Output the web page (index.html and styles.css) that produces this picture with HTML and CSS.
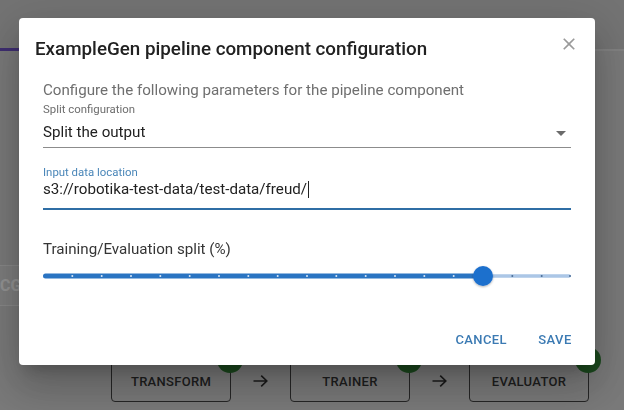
FILE: index.html
```html
<!DOCTYPE html>
<html lang="en">
<head>
<meta charset="utf-8">
<title>ExampleGen configuration</title>
<link rel="stylesheet" href="styles.css">
</head>
<body>
  <div class="page">
    <header class="topbar"><div class="tab-indicator"></div></header>
    <main class="workspace">
      <div class="side-field">CG</div>
      <div class="pipeline">
        <div class="node">TRANSFORM<span class="node-status"></span></div>
        <div class="connector"><svg width="15" height="12" viewBox="0 0 15 12"><path d="M0.5 6H13.8M8.2 0.6L13.8 6 8.2 11.4" fill="none" stroke="currentColor" stroke-width="1.6"/></svg></div>
        <div class="node">TRAINER<span class="node-status"></span></div>
        <div class="connector"><svg width="15" height="12" viewBox="0 0 15 12"><path d="M0.5 6H13.8M8.2 0.6L13.8 6 8.2 11.4" fill="none" stroke="currentColor" stroke-width="1.6"/></svg></div>
        <div class="node">EVALUATOR<span class="node-status"></span></div>
      </div>
    </main>
  </div>

  <div class="overlay">
    <div class="dialog">
      <div class="dialog-header">
        <h2 class="dialog-title">ExampleGen pipeline component configuration</h2>
        <svg class="close-btn" width="20" height="20" viewBox="0 0 24 24"><path d="M19 6.41L17.59 5 12 10.59 6.41 5 5 6.41 10.59 12 5 17.59 6.41 19 12 13.41 17.59 19 19 17.59 13.41 12z"/></svg>
      </div>
      <div class="dialog-content">
        <p class="dialog-subtitle">Configure the following parameters for the pipeline component</p>
        <div class="select-field">
          <div class="field-label">Split configuration</div>
          <div class="select-value"><span>Split the output</span><span class="select-arrow"></span></div>
        </div>
        <div class="input-field">
          <div class="field-label">Input data location</div>
          <div class="input-value">s3://robotika-test-data/test-data/freud/<span class="caret"></span></div>
        </div>
        <div class="slider-label">Training/Evaluation split (%)</div>
        <svg class="slider" width="528" height="20" viewBox="0 0 528 20">
          <defs><filter id="thumbShadow" x="-50%" y="-50%" width="200%" height="200%"><feDropShadow dx="0" dy="1" stdDeviation="1" flood-color="#000" flood-opacity="0.3"/></filter></defs>
          <line x1="2" y1="10" x2="526" y2="10" stroke="#abc6e6" stroke-width="3.5" stroke-linecap="round"/>
          <line x1="2.5" y1="10" x2="440" y2="10" stroke="#2a74c2" stroke-width="5" stroke-linecap="round"/>
          <g fill="#dbe8f6">
            <circle cx="29.3" cy="10" r="1"/><circle cx="58.7" cy="10" r="1"/><circle cx="88" cy="10" r="1"/><circle cx="117.3" cy="10" r="1"/><circle cx="146.7" cy="10" r="1"/><circle cx="176" cy="10" r="1"/><circle cx="205.3" cy="10" r="1"/><circle cx="234.7" cy="10" r="1"/><circle cx="264" cy="10" r="1"/><circle cx="293.3" cy="10" r="1"/><circle cx="322.7" cy="10" r="1"/><circle cx="352" cy="10" r="1"/><circle cx="381.3" cy="10" r="1"/><circle cx="410.7" cy="10" r="1"/>
          </g>
          <g fill="#4a6c97">
            <circle cx="469.3" cy="10" r="1"/><circle cx="498.7" cy="10" r="1"/><circle cx="527" cy="10" r="1"/>
          </g>
          <circle cx="440" cy="10" r="10" fill="#1f6fcd" filter="url(#thumbShadow)"/>
        </svg>
      </div>
      <div class="dialog-actions">
        <button class="btn">Cancel</button>
        <button class="btn">Save</button>
      </div>
    </div>
  </div>
</body>
</html>
```

FILE: styles.css
```css
* { box-sizing: border-box; }
html, body { margin: 0; padding: 0; }
body {
  width: 624px;
  height: 410px;
  overflow: hidden;
  font-family: Roboto, "Noto Sans", sans-serif;
  background: #d0d0d0;
}

/* background page */
.topbar {
  height: 51px;
  background: #c6c6c6;
  box-shadow: inset 0 -2px 0 #dedede;
  display: flex;
  align-items: flex-end;
}
.tab-indicator { width: 140px; height: 3px; background: #6b4fc0; }
.workspace { padding-top: 214px; }
.side-field {
  width: 160px;
  height: 41px;
  border-top: 1px solid #e8e8e8;
  border-bottom: 1px solid #e8e8e8;
  background: #d6d6d6;
  color: #fcfcfc;
  font-size: 16px;
  font-weight: 700;
  line-height: 39px;
}
.pipeline {
  display: flex;
  align-items: center;
  margin-top: 54px;
  padding-left: 111px;
}
.node {
  position: relative;
  width: 120px;
  height: 42px;
  border: 1px solid #404040;
  border-radius: 4px;
  display: flex;
  align-items: center;
  justify-content: center;
  font-size: 13px;
  font-weight: 500;
  letter-spacing: 0.3px;
  color: #333;
}
.node-status {
  position: absolute;
  top: -14px;
  right: -13px;
  width: 26px;
  height: 26px;
  border-radius: 50%;
  background: #2e7d32;
}
.connector {
  width: 59px;
  display: flex;
  justify-content: center;
  color: #2c2c2c;
}

/* dialog */
.overlay {
  position: fixed;
  inset: 0;
  background: rgba(0, 0, 0, 0.42);
  padding: 18px 0 0 19px;
}
.dialog {
  width: 576px;
  background: #fff;
  border-radius: 4px;
  box-shadow: 0 11px 15px -7px rgba(0,0,0,.2), 0 24px 38px 3px rgba(0,0,0,.14), 0 9px 46px 8px rgba(0,0,0,.12);
}
.dialog-header {
  display: flex;
  justify-content: space-between;
  align-items: flex-start;
  padding: 19px 16px 0 16px;
}
.dialog-title {
  margin: 0;
  font-size: 18.8px;
  font-weight: 500;
  line-height: 24px;
  color: #212121;
}
.close-btn { margin-top: -3px; fill: #9a9a9a; }

.dialog-content { padding: 0 24px 27px; }
.dialog-subtitle {
  margin: 19px 0 0;
  font-size: 15.15px;
  line-height: 20px;
  color: #6f6f6f;
}
.field-label { font-size: 11.4px; color: #6d6d6d; }
.select-field { margin-top: 2px; }
.select-field .field-label { line-height: 14px; }
.select-value {
  display: flex;
  align-items: center;
  justify-content: space-between;
  padding: 4px 0 3px;
  border-bottom: 1px solid #8c8c8c;
  font-size: 15.15px;
  line-height: 24px;
  color: #212121;
}
.select-arrow {
  width: 0;
  height: 0;
  border-left: 5px solid transparent;
  border-right: 5px solid transparent;
  border-top: 5px solid #6b6b6b;
  margin: 3px 5px 0 0;
}
.input-field { margin-top: 18px; }
.input-field .field-label { line-height: 12px; color: #4a86b8; }
.input-value {
  font-size: 15.15px;
  line-height: 22px;
  padding-bottom: 8px;
  border-bottom: 2px solid #2f6ea5;
  color: #212121;
}
.caret {
  display: inline-block;
  width: 1px;
  height: 17px;
  background: #222;
  vertical-align: -4px;
  margin-left: 1px;
}
.slider-label {
  margin-top: 29px;
  font-size: 15.15px;
  line-height: 20px;
  color: #353535;
}
.slider { display: block; margin-top: 7px; overflow: visible; }

.dialog-actions {
  display: flex;
  justify-content: flex-end;
  gap: 8px;
  padding: 8px;
}
.btn {
  min-width: 64px;
  height: 36px;
  padding: 0 8px;
  border: 0;
  background: none;
  font-family: inherit;
  font-size: 13px;
  font-weight: 500;
  letter-spacing: 0.4px;
  text-transform: uppercase;
  color: #3b7ab3;
}
```
